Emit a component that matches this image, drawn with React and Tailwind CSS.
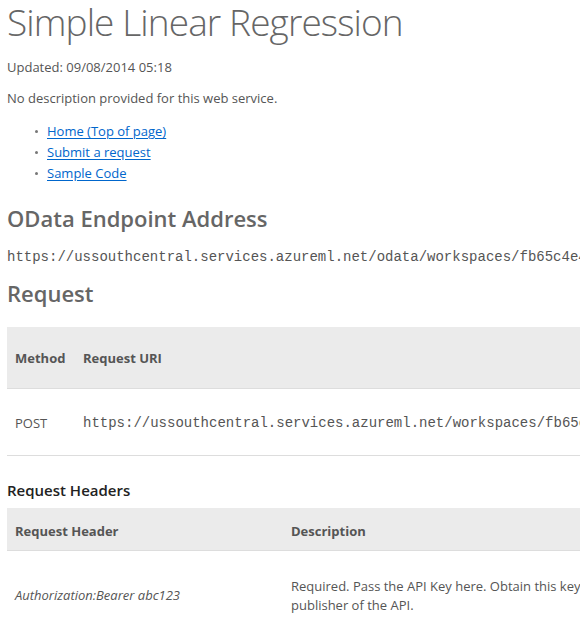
export default function App() {
  return (
    <div className="w-[580px] h-[620px] overflow-hidden bg-white text-[#555] font-['Open_Sans',sans-serif]">
      <div className="flex flex-col pl-[7px] w-[900px]">
        <h1 className="text-[37px] leading-[44px] font-light text-[#666] tracking-[-0.9px]">Simple Linear Regression</h1>
        <p className="mt-[13px] text-[13px] leading-[20px]">Updated: 09/08/2014 05:18</p>
        <p className="mt-[11px] text-[13px] leading-[20px]">No description provided for this web service.</p>
        <ul className="mt-[13px] flex flex-col text-[13px] leading-[21px]">
          {["Home (Top of page)", "Submit a request", "Sample Code"].map((t) => (
            <li key={t} className="flex items-center">
              <span className="ml-[28px] mr-[9px] w-[3px] h-[3px] rounded-full bg-[#777]" />
              <a href="#" className="text-[#0066cc] underline underline-offset-[2px]">{t}</a>
            </li>
          ))}
        </ul>
        <h2 className="mt-[19px] text-[22px] leading-[30px] font-semibold text-[#666]">OData Endpoint Address</h2>
        <p className="mt-[14px] text-[14px] leading-[20px] font-['Liberation_Mono',monospace] text-[#555] whitespace-nowrap">
          https://ussouthcentral.services.azureml.net/odata/workspaces/fb65c4e4a8b84d1ba2a1c8bd70b0d1e1/services/0c2b5d9e
        </p>
        <h2 className="mt-[11px] text-[22px] leading-[30px] font-semibold text-[#666]">Request</h2>
        <div className="mt-[19px] flex flex-col text-[13px]">
          <div className="flex items-center h-[62px] pt-[2px] bg-[#ebebeb] border-b border-[#ddd] font-bold text-[#555]">
            <div className="w-[68px] shrink-0 px-[8px]">Method</div>
            <div className="px-[8px]">Request URI</div>
          </div>
          <div className="flex items-center h-[67px] pt-[3px] border-b border-[#ddd]">
            <div className="w-[68px] shrink-0 px-[8px]">POST</div>
            <div className="px-[8px] text-[14px] font-['Liberation_Mono',monospace] text-[#555] whitespace-nowrap">
              https://ussouthcentral.services.azureml.net/workspaces/fb65c4e4a8b84d1ba2a1c8bd70b0d1e1/services/0c2b5d9e/execute
            </div>
          </div>
        </div>
        <h3 className="mt-[24px] text-[15px] leading-[20px] font-semibold text-[#222]">Request Headers</h3>
        <div className="mt-[8px] flex flex-col text-[13px]">
          <div className="flex items-center h-[43px] pt-[5px] bg-[#ebebeb] border-b border-[#ddd] font-bold text-[#555]">
            <div className="w-[276px] shrink-0 px-[8px]">Request Header</div>
            <div className="px-[8px]">Description</div>
          </div>
          <div className="flex items-center pt-[26px] pb-[20px] border-b border-[#ddd]">
            <div className="w-[276px] shrink-0 px-[8px] italic">Authorization:Bearer abc123</div>
            <div className="px-[8px] leading-[19px] whitespace-nowrap">
              Required. Pass the API Key here. Obtain this key from the
              <br />
              publisher of the API.
            </div>
          </div>
        </div>
      </div>
    </div>
  );
}
